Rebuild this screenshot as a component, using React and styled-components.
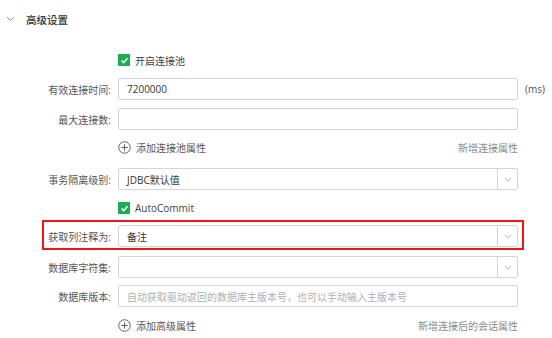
import React from 'react';
import styled, { createGlobalStyle } from 'styled-components';

const GlobalStyle = createGlobalStyle`
  body {
    margin: 0;
    background: #fff;
    font-family: "Open Sans", "Noto Sans CJK SC", sans-serif;
    color: #333;
  }
`;

const Page = styled.div`
  width: 552px;
  height: 338px;
  overflow: hidden;
  display: flex;
  flex-direction: column;
`;

const Header = styled.div`
  height: 38px;
  display: flex;
  align-items: center;
  padding-left: 6px;
  font-size: 10.5px;
  font-weight: 500;
  color: #333;

  svg {
    margin-right: 11px;
  }
`;

const Row = styled.div`
  display: grid;
  grid-template-columns: 118px 400px 1fr;
  align-items: center;
  margin-top: ${(p) => p.$mt || 0}px;
  height: ${(p) => p.$h || 22}px;
`;

const HighlightRow = styled(Row)`
  margin-left: 42px;
  width: 482px;
  box-sizing: border-box;
  height: 30px;
  border: 2px solid #f01414;
  grid-template-columns: 74px 400px;
  padding-top: 2px;
`;

const Label = styled.div`
  text-align: right;
  padding-right: 7px;
  font-size: 10px;
  color: #555;
  white-space: nowrap;
`;

const Input = styled.div`
  box-sizing: border-box;
  height: ${(p) => p.$h || 22}px;
  border: 1px solid #d5d5d5;
  border-radius: 2px;
  display: flex;
  align-items: center;
  padding-left: 8px;
  font-size: 10px;
  color: ${(p) => (p.$placeholder ? '#b0b0b0' : '#333')};
  white-space: nowrap;
  overflow: hidden;
`;

const Select = styled(Input)`
  padding-left: 0;
  .value {
    flex: 1;
    padding-left: 8px;
  }
  .arrow {
    width: 19px;
    align-self: stretch;
    border-left: 1px solid #d5d5d5;
    display: flex;
    align-items: center;
    justify-content: center;
  }
`;

const Suffix = styled.div`
  padding-left: 7px;
  font-size: 10px;
  color: #555;
`;

const CheckItem = styled.div`
  display: flex;
  align-items: center;
  font-size: 10px;
  color: #444;
  gap: 5px;
`;

const Box = styled.span`
  width: 12px;
  height: 12px;
  border-radius: 1px;
  background: #19ad55;
  display: inline-flex;
  align-items: center;
  justify-content: center;
`;

const AddRow = styled.div`
  display: flex;
  justify-content: space-between;
  align-items: center;
  font-size: 10px;
  color: #555;

  .add {
    display: flex;
    align-items: center;
    gap: 5px;
  }
  .hint {
    color: #8a8a8a;
  }
`;

const Check = () => (
  <Box>
    <svg width="9" height="9" viewBox="0 0 10 10">
      <path d="M1.8 5.2 L4.1 7.4 L8.3 2.6" fill="none" stroke="#fff" strokeWidth="1.8" />
    </svg>
  </Box>
);

const Chevron = ({ size = 8, color = '#999' }) => (
  <svg width={size} height={size / 2 + 1} viewBox="0 0 10 6">
    <path d="M1 1 L5 5 L9 1" fill="none" stroke={color} strokeWidth="1" />
  </svg>
);

const PlusCircle = () => (
  <svg width="13" height="13" viewBox="0 0 14 14">
    <circle cx="7" cy="7" r="6.2" fill="none" stroke="#555" strokeWidth="1" />
    <path d="M7 3.6 V10.4 M3.6 7 H10.4" stroke="#555" strokeWidth="1" />
  </svg>
);

const SelectField = ({ value, h }) => (
  <Select $h={h}>
    <span className="value">{value}</span>
    <span className="arrow">
      <Chevron size={8} color="#aaa" />
    </span>
  </Select>
);

export default function App() {
  return (
    <Page>
      <GlobalStyle />
      <Header>
        <Chevron size={9} color="#888" />
        高级设置
      </Header>

      <Row $mt={12} $h={20}>
        <span />
        <CheckItem>
          <Check />
          开启连接池
        </CheckItem>
      </Row>

      <Row $mt={8}>
        <Label>有效连接时间:</Label>
        <Input>7200000</Input>
        <Suffix>(ms)</Suffix>
      </Row>

      <Row $mt={8}>
        <Label>最大连接数:</Label>
        <Input />
      </Row>

      <Row $mt={7} $h={20}>
        <span />
        <AddRow>
          <span className="add">
            <PlusCircle />
            添加连接池属性
          </span>
          <span className="hint">新增连接属性</span>
        </AddRow>
      </Row>

      <Row $mt={11}>
        <Label>事务隔离级别:</Label>
        <SelectField value="JDBC默认值" />
      </Row>

      <Row $mt={9} $h={18}>
        <span />
        <CheckItem>
          <Check />
          AutoCommit
        </CheckItem>
      </Row>

      <HighlightRow $mt={3}>
        <Label>获取列注释为:</Label>
        <SelectField value="备注" h={22} />
      </HighlightRow>

      <Row $mt={6}>
        <Label>数据库字符集:</Label>
        <SelectField value="" />
      </Row>

      <Row $mt={7}>
        <Label>数据库版本:</Label>
        <Input $placeholder>自动获取驱动返回的数据库主版本号，也可以手动输入主版本号</Input>
      </Row>

      <Row $mt={8} $h={20}>
        <span />
        <AddRow>
          <span className="add">
            <PlusCircle />
            添加高级属性
          </span>
          <span className="hint">新增连接后的会话属性</span>
        </AddRow>
      </Row>
    </Page>
  );
}
